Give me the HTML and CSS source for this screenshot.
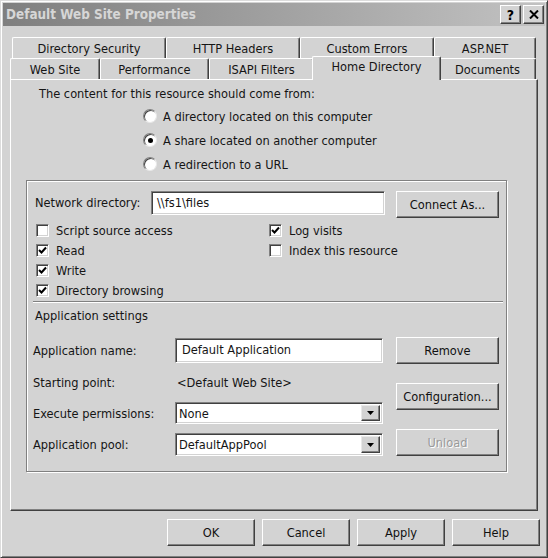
FILE: index.html
```html
<!DOCTYPE html>
<html>
<head>
<meta charset="utf-8">
<link rel="stylesheet" href="styles.css">
</head>
<body>
<div class="window">
  <div class="titlebar">
    <span class="title">Default Web Site Properties</span>
    <div class="tb-btns">
      <span class="tb-btn tb-help">?</span>
      <span class="tb-btn tb-close"><svg width="10" height="9" viewBox="0 0 10 9"><path d="M1 0.5 L9 8.5 M9 0.5 L1 8.5" stroke="#000" stroke-width="2"/></svg></span>
    </div>
  </div>

  <div class="tabs">
    <div class="tabrow row1">
      <div class="tab w154">Directory Security</div>
      <div class="tab w134">HTTP Headers</div>
      <div class="tab w134">Custom Errors</div>
      <div class="tab w102">ASP.NET</div>
    </div>
    <div class="tabrow row2">
      <div class="tab w90">Web Site</div>
      <div class="tab w109">Performance</div>
      <div class="tab w105">ISAPI Filters</div>
      <div class="tab w125 selected">Home Directory</div>
      <div class="tab w97">Documents</div>
    </div>
  </div>

  <div class="panel">
    <p class="intro">The content for this resource should come from:</p>
    <div class="radios">
      <div class="radio"><span class="rb"></span>A directory located on this computer</div>
      <div class="radio"><span class="rb on"></span>A share located on another computer</div>
      <div class="radio"><span class="rb"></span>A redirection to a URL</div>
    </div>

    <div class="group">
      <div class="netrow">
        <span class="net-label">Network directory:</span>
        <div class="field net-field">\\fs1\files</div>
        <div class="btn btn-side">Connect As...</div>
      </div>

      <div class="checks">
        <div class="chk"><span class="cb"></span>Script source access</div>
        <div class="chk"><span class="cb on"><svg width="9" height="9" viewBox="0 0 9 9"><path d="M1 4 L3.5 6.5 L8 1.5" fill="none" stroke="#000" stroke-width="2"/></svg></span>Read</div>
        <div class="chk"><span class="cb on"><svg width="9" height="9" viewBox="0 0 9 9"><path d="M1 4 L3.5 6.5 L8 1.5" fill="none" stroke="#000" stroke-width="2"/></svg></span>Write</div>
        <div class="chk"><span class="cb on"><svg width="9" height="9" viewBox="0 0 9 9"><path d="M1 4 L3.5 6.5 L8 1.5" fill="none" stroke="#000" stroke-width="2"/></svg></span>Directory browsing</div>
        <div class="chk"><span class="cb on"><svg width="9" height="9" viewBox="0 0 9 9"><path d="M1 4 L3.5 6.5 L8 1.5" fill="none" stroke="#000" stroke-width="2"/></svg></span>Log visits</div>
        <div class="chk"><span class="cb"></span>Index this resource</div>
      </div>

      <div class="sep"></div>

      <div class="app-title">Application settings</div>

      <div class="app">
        <div class="app-left">
          <div class="arow arow-name">
            <span class="alabel">Application name:</span>
            <div class="field name-field">Default Application</div>
          </div>
          <div class="arow arow-start">
            <span class="alabel">Starting point:</span>
            <span class="avalue">&lt;Default Web Site&gt;</span>
          </div>
          <div class="arow arow-exec">
            <span class="alabel">Execute permissions:</span>
            <div class="select"><span class="sel-text">None</span><span class="sel-arrow"><svg width="7" height="4" viewBox="0 0 7 4"><path d="M0 0 H7 L3.5 4 Z" fill="#000"/></svg></span></div>
          </div>
          <div class="arow arow-pool">
            <span class="alabel">Application pool:</span>
            <div class="select"><span class="sel-text">DefaultAppPool</span><span class="sel-arrow"><svg width="7" height="4" viewBox="0 0 7 4"><path d="M0 0 H7 L3.5 4 Z" fill="#000"/></svg></span></div>
          </div>
        </div>
        <div class="app-right">
          <div class="btn btn-side">Remove</div>
          <div class="btn btn-side">Configuration...</div>
          <div class="btn btn-side disabled">Unload</div>
        </div>
      </div>
    </div>
  </div>

  <div class="footer">
    <div class="btn btn-foot">OK</div>
    <div class="btn btn-foot">Cancel</div>
    <div class="btn btn-foot">Apply</div>
    <div class="btn btn-foot">Help</div>
  </div>
</div>
</body>
</html>
```

FILE: styles.css
```css
* { box-sizing: border-box; }

html, body {
  margin: 0;
  padding: 0;
  background: #d3d3d3;
}

body {
  font-family: "DejaVu Sans Condensed", "DejaVu Sans", sans-serif;
  font-size: 12.7px;
  color: #151515;
}

.window {
  width: 548px;
  height: 558px;
  background: #d3d3d3;
  border: 1px solid;
  border-color: #dcdcdc #404040 #404040 #dcdcdc;
  box-shadow: inset 1px 1px #fff, inset -1px -1px #808080;
  padding: 2px;
  display: flex;
  flex-direction: column;
}

/* title bar */
.titlebar {
  height: 23px;
  flex: none;
  display: flex;
  align-items: center;
  justify-content: space-between;
  padding-left: 3px;
  padding-right: 1px;
  background: linear-gradient(to right, #7f7f7f, #c2c2c2);
}

.title {
  font-weight: bold;
  font-size: 13.4px;
  color: #d6d6d6;
}

.tb-btns {
  display: flex;
  gap: 2px;
}

.tb-btn {
  width: 21px;
  height: 19px;
  display: flex;
  align-items: center;
  justify-content: center;
  background: #d3d3d3;
  border: 1px solid;
  border-color: #fff #404040 #404040 #fff;
  box-shadow: inset -1px -1px #808080;
  font-weight: bold;
  font-size: 14px;
  color: #000;
}

/* tabs */
.tabs {
  margin-top: 11px;
  flex: none;
}

.tabrow {
  display: flex;
  height: 21px;
}

.row1 { margin-left: 9px; }
.row2 { margin-left: 7px; }

.tab {
  flex: none;
  height: 21px;
  border-top: 1px solid #fff;
  border-left: 1px solid #fff;
  border-right: 1px solid #404040;
  box-shadow: inset -1px 0 #808080;
  border-top-left-radius: 2px;
  border-top-right-radius: 2px;
  text-align: center;
  line-height: 19px;
  padding-top: 1px;
  white-space: nowrap;
  background: #d3d3d3;
}

.w154 { width: 154px; }
.w134 { width: 134px; }
.w102 { width: 102px; }
.w90 { width: 90px; }
.w109 { width: 109px; }
.w105 { width: 105px; }
.w125 { width: 125px; }
.w97 { width: 97px; }

.tab.selected {
  position: relative;
  z-index: 2;
  width: 129px;
  height: 24px;
  margin: -2px -2px -1px -2px;
  padding-top: 1px;
  line-height: 18px;
}

/* panel */
.panel {
  flex: none;
  margin-left: 7px;
  width: 528px;
  height: 432px;
  border-top: 1px solid #fff;
  border-left: 1px solid #fff;
  border-right: 1px solid #404040;
  border-bottom: 1px solid #404040;
  box-shadow: inset -1px -1px #808080;
  position: relative;
  z-index: 1;
}

.intro {
  margin: 0;
  padding: 6px 0 0 28px;
  line-height: 16px;
}

.radios {
  margin-top: 2px;
  padding-left: 132px;
}

.radio {
  height: 24px;
  display: flex;
  align-items: center;
  gap: 6px;
}

.rb {
  width: 14px;
  height: 14px;
  border-radius: 50%;
  background: #fff;
  border: 1px solid;
  border-color: #808080 #e8e8e8 #e8e8e8 #808080;
  box-shadow: inset 1px 1px #404040;
  display: flex;
  align-items: center;
  justify-content: center;
}

.rb.on::after {
  content: "";
  width: 5px;
  height: 5px;
  border-radius: 50%;
  background: #000;
}

/* group box */
.group {
  margin: 4px 0 0 15px;
  width: 481px;
  border: 1px solid #808080;
  box-shadow: inset 1px 1px #fff, 1px 1px #fff;
  padding: 10px 6px 15px 8px;
}

.netrow {
  display: flex;
  align-items: flex-start;
  height: 27px;
}

.net-label {
  width: 116px;
  line-height: 24px;
}

.field {
  height: 24px;
  background: #fff;
  border: 1px solid;
  border-color: #808080 #fff #fff #808080;
  box-shadow: inset 1px 1px #404040, inset -1px -1px #d3d3d3;
  padding: 3px 5px 0;
  line-height: 16px;
  white-space: nowrap;
}

.net-field {
  width: 234px;
  margin-right: 11px;
}

.btn {
  display: flex;
  align-items: center;
  justify-content: center;
  background: #d3d3d3;
  border: 1px solid;
  border-color: #fff #404040 #404040 #fff;
  box-shadow: inset -1px -1px #808080;
  color: #111;
  white-space: nowrap;
}

.btn-side {
  width: 103px;
  height: 27px;
}

.btn.disabled {
  color: #9a9a9a;
  text-shadow: 1px 1px #fff;
}

.checks {
  margin-top: 2px;
  padding-left: 1px;
  display: grid;
  grid-template-columns: 233px auto;
  grid-template-rows: repeat(4, 20px);
  grid-auto-flow: column;
}

.chk {
  display: flex;
  align-items: center;
  gap: 7px;
}

.cb {
  width: 13px;
  height: 13px;
  flex: none;
  background: #fff;
  border: 1px solid;
  border-color: #808080 #fff #fff #808080;
  box-shadow: inset 1px 1px #404040, inset -1px -1px #d3d3d3;
  display: flex;
  align-items: center;
  justify-content: center;
}

.cb svg { display: block; }

.sep {
  margin: 1px 0 0 -2px;
  width: 470px;
  height: 2px;
  border-top: 1px solid #808080;
  border-bottom: 1px solid #fff;
}

.app-title {
  margin-top: 5px;
  line-height: 16px;
}

.app {
  margin: 13px 0 0 -2px;
  display: flex;
  align-items: flex-start;
  gap: 13px;
}

.app-left {
  width: 350px;
  padding-top: 1px;
}

.app-right {
  width: 103px;
  display: flex;
  flex-direction: column;
  gap: 19px;
}

.arow {
  display: flex;
  align-items: center;
}

.arow-name { height: 25px; }
.arow-start { height: 16px; margin-top: 11px; }
.arow-exec { height: 22px; margin-top: 12px; }
.arow-pool { height: 23px; margin-top: 9px; }

.alabel {
  width: 142px;
  flex: none;
}

.name-field {
  width: 208px;
  height: 25px;
  padding: 3px 6px 0;
}

.avalue {
  padding-left: 2px;
}

.select {
  width: 208px;
  height: 100%;
  background: #fff;
  border: 1px solid;
  border-color: #808080 #fff #fff #808080;
  box-shadow: inset 1px 1px #404040, inset -1px -1px #d3d3d3;
  padding: 2px;
  display: flex;
  align-items: center;
  justify-content: space-between;
}

.sel-text {
  padding-left: 1px;
}

.sel-arrow {
  width: 19px;
  height: 100%;
  background: #d3d3d3;
  border: 1px solid;
  border-color: #e8e8e8 #404040 #404040 #e8e8e8;
  box-shadow: inset -1px -1px #808080;
  display: flex;
  align-items: center;
  justify-content: center;
}

.sel-arrow svg { display: block; }

/* footer */
.footer {
  flex: none;
  margin-top: 8px;
  padding-right: 5px;
  display: flex;
  justify-content: flex-end;
  gap: 7px;
}

.btn-foot {
  width: 88px;
  height: 27px;
}
```
